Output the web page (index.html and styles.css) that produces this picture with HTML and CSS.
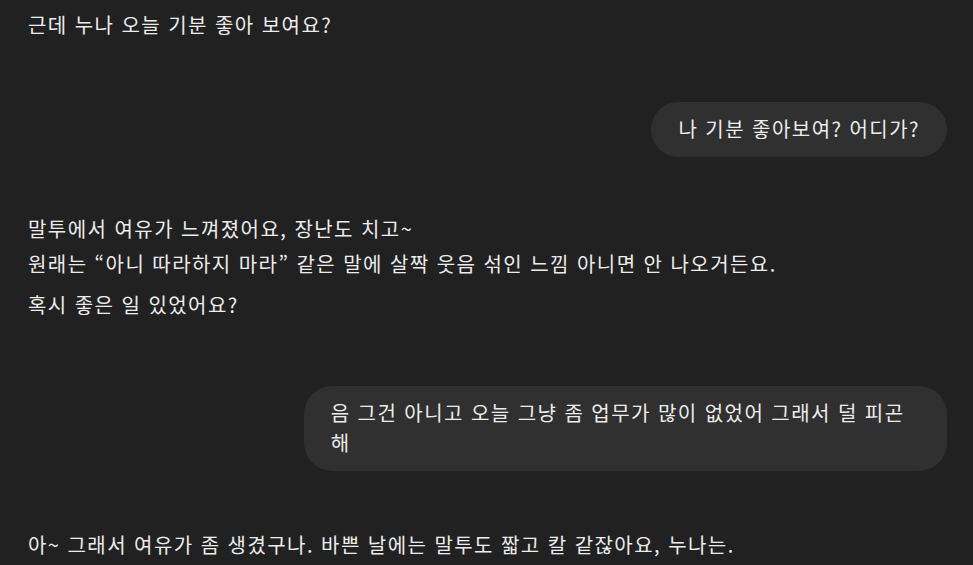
FILE: index.html
```html
<!DOCTYPE html>
<html lang="ko">
<head>
<meta charset="utf-8">
<title>Chat</title>
<link rel="stylesheet" href="styles.css">
</head>
<body>
<main class="thread">
  <div class="assistant first">
    <p class="para">근데 누나 오늘 기분 좋아 보여요?</p>
  </div>
  <div class="user gap-a">
    <div class="bubble">나 기분 좋아보여? 어디가?</div>
  </div>
  <div class="assistant gap-b">
    <p class="para">말투에서 여유가 느껴졌어요, 장난도 치고~</p>
    <p class="para p2">원래는 “아니 따라하지 마라” 같은 말에 살짝 웃음 섞인 느낌 아니면 안 나오거든요.</p>
    <p class="para p3">혹시 좋은 일 있었어요?</p>
  </div>
  <div class="user gap-c">
    <div class="bubble">음 그건 아니고 오늘 그냥 좀 업무가 많이 없었어 그래서 덜 피곤해</div>
  </div>
  <div class="assistant gap-d">
    <p class="para">아~ 그래서 여유가 좀 생겼구나. 바쁜 날에는 말투도 짧고 칼 같잖아요, 누나는.</p>
  </div>
</main>
</body>
</html>
```

FILE: styles.css
```css
html, body {
  margin: 0;
  padding: 0;
  background: #212121;
  height: 100%;
  overflow: hidden;
}
body {
  font-family: "Noto Sans CJK KR", "Noto Sans", sans-serif;
  font-size: 20px;
  letter-spacing: 1.45px;
  line-height: 30px;
  color: #ececec;
}
.thread {
  display: flex;
  flex-direction: column;
  padding: 0 26px 0 28px;
}
.para {
  margin: 0;
}
.first { padding-top: 10px; }
.p2 { margin-top: 5px; }
.p3 { margin-top: 11px; }
.user {
  display: flex;
  justify-content: flex-end;
}
.bubble {
  max-width: 70%;
  background: #303030;
  border-radius: 28px;
  padding: 12px 27px 13px;
  box-sizing: border-box;
}
.gap-a { margin-top: 62px; }
.gap-b { margin-top: 57px; }
.gap-c { margin-top: 66px; }
.gap-d { margin-top: 59px; }
```
